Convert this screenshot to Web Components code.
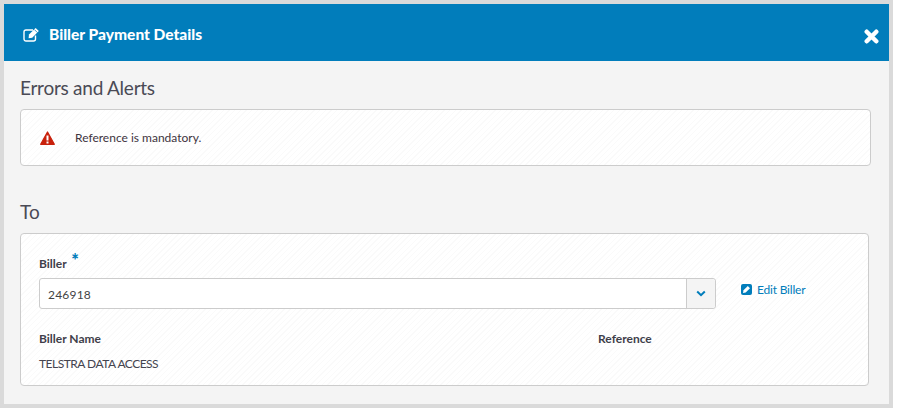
<!DOCTYPE html>
<html><head><meta charset="utf-8"><style>
html,body{margin:0;padding:0;background:#fff}
body{width:899px;height:414px;overflow:hidden;font-family:Lato,"Open Sans",sans-serif}
biller-modal{margin:4px 0 0 4px}
</style></head><body>
<biller-modal>
  <modal-header title-text="Biller Payment Details"></modal-header>
  <section-title style="margin-top:15px;letter-spacing:-.25px">Errors and Alerts</section-title>
  <alert-card>Reference is mandatory.</alert-card>
  <section-title style="margin-top:34px">To</section-title>
  <biller-card></biller-card>
</biller-modal>
<script>
const stripes='repeating-linear-gradient(135deg,#fff 0 3px,#fafafa 3px 4px)';
function def(name,html,init){customElements.define(name,class extends HTMLElement{connectedCallback(){if(this.shadowRoot)return;const r=this.attachShadow({mode:'open'});r.innerHTML=html;init&&init(this,r);}})}
def('biller-modal',`<style>:host{display:block;width:885px;height:400px;background:#f4f4f4;box-sizing:border-box;overflow:hidden;box-shadow:0 0 0 4px #dadada}
.wrap{display:flow-root}</style><div class="wrap"><slot></slot></div>`);
def('modal-header',`<style>:host{display:flex;align-items:center;height:57px;background:#017dbb;color:#fff;padding:0 18px 0 19px;position:relative;font:900 15.5px Lato,sans-serif}
svg.e{width:17px;height:15px;margin:3px 9px 0 0;flex:none}
span{margin-top:3px}
svg.x{position:absolute;right:10px;top:25px;width:15px;height:15px}</style>
<svg class="e" viewBox="0 0 17 15"><path d="M12.500 8.500V12a2 2 0 0 1-2 2H3a2 2 0 0 1-2-2V5a2 2 0 0 1 2-2h7" fill="none" stroke="#fff" stroke-width="1.400"/><path d="M6 7.600 12.600 1 15.800 4.100 9.200 10.800 5.600 11.200Z" fill="#fff"/><path d="M11.400 2.600 14.400 5.600" stroke="#017dbb" stroke-width=".8"/></svg>
<span id="t"></span>
<svg class="x" viewBox="0 0 15 15"><path d="M2.700 2.700 12.300 12.300M12.300 2.700 2.700 12.300" stroke="#fff" stroke-width="4.400" stroke-linecap="round"/></svg>`,(h,r)=>{r.getElementById('t').textContent=h.getAttribute('title-text')});
def('section-title',`<style>:host{display:block;margin-left:16px;color:#4a4a55;font:400 19px/24px Lato,sans-serif}</style><slot></slot>`);
def('alert-card',`<style>:host{display:flex;align-items:center;box-sizing:border-box;width:851px;height:57px;margin:9px 0 0 16px;background:${stripes};border:1px solid #ccc;border-radius:4px;padding-left:19px;color:#40343e;font:400 12px Lato,sans-serif}
svg{width:15px;height:14px;margin-right:20px;flex:none}
span{display:block;margin-top:-1px}</style>
<svg viewBox="0 0 15 14"><path d="M7.500 1 14.300 13.300H.7Z" fill="#c8210c" stroke="#c8210c" stroke-width="1.300" stroke-linejoin="round"/><rect x="6.500" y="4.500" width="2" height="5" fill="#fff"/><rect x="6.500" y="10.500" width="2" height="2" fill="#fff"/></svg><span><slot></slot></span>`);
def('biller-card',`<style>:host{display:block;box-sizing:border-box;width:849px;height:153px;margin:9px 0 0 16px;background:${stripes};border:1px solid #ccc;border-radius:4px;padding:21px 18px 0;color:#44444f;font:400 12px Lato,sans-serif}
.lab{font-weight:700;line-height:18px;color:#3f3f4a}
.lab sup{color:#017dbb;font-size:18px;line-height:0;font-weight:900;vertical-align:0;margin-left:2px;position:relative;top:-1px}
.row{display:flex;align-items:center;margin-top:5px}
.sel{display:flex;width:677px;height:31px;box-sizing:border-box;background:#fff;border:1px solid #ccc;border-radius:3px;font-size:12px;color:#444}
.val{flex:1;display:flex;align-items:center;padding:2px 0 0 8px;letter-spacing:.2px}
.btn{width:28px;border-left:1px solid #ccc;background:#f4f4f4;display:flex;align-items:center;justify-content:center;border-radius:0 3px 3px 0}
.btn svg{width:10px;height:7px}
.edit{display:flex;align-items:center;margin:-9px 0 0 25px;color:#017dbb;letter-spacing:-.2px}
.edit svg{width:11px;height:11px;margin-right:5px}
.grid{display:grid;grid-template-columns:559px 1fr;margin-top:22px}
.grid b{font-weight:700;line-height:16px;color:#3f3f4a}
.v{margin-top:9px;line-height:16px;letter-spacing:-.5px}</style>
<div class="lab">Biller <sup>*</sup></div>
<div class="row"><div class="sel"><div class="val">246918</div><div class="btn"><svg viewBox="0 0 10 7"><path d="M1.200 1.500 5 5.200 8.800 1.500" fill="none" stroke="#017dbb" stroke-width="2"/></svg></div></div>
<div class="edit"><svg viewBox="0 0 11 11"><rect width="11" height="11" rx="2" fill="#017dbb"/><path d="M2 9 2.500 6.300 6.800 2 9 4.200 4.700 8.500Z" fill="#fff"/></svg>Edit Biller</div></div>
<div class="grid"><b>Biller Name</b><b>Reference</b><div class="v">TELSTRA DATA ACCESS</div><div></div></div>`);
</script>
</body></html>
